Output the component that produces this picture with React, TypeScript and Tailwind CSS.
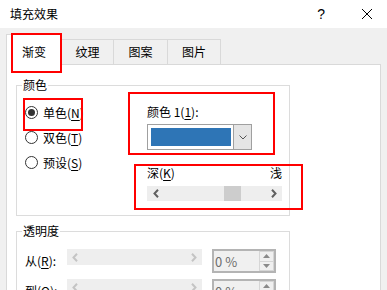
import React from "react";

const U = ({ c }: { c: string }) => <span className="underline underline-offset-[2px]">{c}</span>;

function Radio({ checked, children }: { checked?: boolean; children: React.ReactNode }) {
  return (
    <div className="h-[25px] flex items-center">
      <div className="ml-[8px] w-[13px] h-[13px] rounded-full border border-[#333333] bg-white flex items-center justify-center">
        {checked && <div className="w-[7px] h-[7px] rounded-full bg-[#333333]" />}
      </div>
      <span className="ml-[5px] leading-none">{children}</span>
    </div>
  );
}

function Chev({ dir, color }: { dir: "l" | "r"; color: string }) {
  return (
    <svg width="6" height="9" viewBox="0 0 6 9">
      <path
        d={dir === "l" ? "M5 0.8L1.5 4.5L5 8.2" : "M1 0.8L4.5 4.5L1 8.2"}
        fill="none"
        stroke={color}
        strokeWidth="2"
      />
    </svg>
  );
}

function Spinner() {
  return (
    <div className="ml-[10px] w-[64px] h-[24px] border-2 border-[#b4b4b4] bg-[#f0f0f0] flex">
      <div className="flex-1 flex items-center pl-[1px] text-[13px] text-[#6d6d6d] leading-none">0 %</div>
      <div className="w-[15px] flex flex-col">
        <div className="flex-1 border border-[#d6d6d6] flex items-center justify-center">
          <svg width="7" height="4" viewBox="0 0 7 4"><path d="M0 4L3.5 0L7 4Z" fill="#8a8a8a" /></svg>
        </div>
        <div className="flex-1 border border-t-0 border-[#d6d6d6] flex items-center justify-center">
          <svg width="7" height="4" viewBox="0 0 7 4"><path d="M0 0L3.5 4L7 0Z" fill="#8a8a8a" /></svg>
        </div>
      </div>
    </div>
  );
}

function TRow({ label }: { label: React.ReactNode }) {
  return (
    <div className="h-[24px] flex items-start mb-[6px]">
      <div className="pl-[8px] w-[50px] h-[24px] flex items-center leading-none">{label}</div>
      <div className="w-[135px] h-[16px] bg-[#eeeeee] flex items-center justify-between px-[5px]">
        <Chev dir="l" color="#c4c4c4" />
        <Chev dir="r" color="#c4c4c4" />
      </div>
      <Spinner />
    </div>
  );
}

export default function App() {
  return (
    <div className="relative w-[387px] h-[290px] overflow-hidden bg-[#f0f0f0] flex flex-col font-['Noto_Sans_CJK_SC',sans-serif] text-[12px] text-black">
      {/* title bar */}
      <div className="h-[28px] bg-white flex items-center shrink-0">
        <span className="ml-[10px] leading-none">填充效果</span>
        <span className="ml-auto mr-[37px] text-[14px] leading-none font-['Liberation_Sans',sans-serif]">?</span>
        <svg className="mr-[15px]" width="10" height="10" viewBox="0 0 10 10">
          <path d="M0 0L10 10M10 0L0 10" stroke="#000" strokeWidth="1" />
        </svg>
      </div>

      {/* tabs */}
      <div className="h-[36px] flex items-end pl-[6px] shrink-0 relative z-10">
        <div className="w-[56px] h-[31px] mb-[-1px] bg-white border border-b-0 border-[#d9d9d9] flex items-center justify-center pt-[4px] leading-none">
          渐变
        </div>
        <div className="w-[52px] h-[25px] border-t border-r border-[#d9d9d9] flex items-center justify-center leading-none">纹理</div>
        <div className="w-[54px] h-[25px] border-t border-r border-[#d9d9d9] flex items-center justify-center leading-none">图案</div>
        <div className="w-[53px] h-[25px] border-t border-r border-[#d9d9d9] flex items-center justify-center leading-none">图片</div>
      </div>

      {/* panel */}
      <div className="flex-1 mx-[6px] border border-[#d9d9d9] bg-white pl-[9px] pt-[20px] flex flex-col">
        {/* 颜色 group */}
        <div className="relative w-[274px] h-[131px] shrink-0 border border-[#dcdcdc] flex">
          <span className="absolute left-[5px] top-[-7px] bg-white px-[1px] leading-none">颜色</span>
          <div className="w-[130px] pt-[14px] flex flex-col">
            <Radio checked>单色(<U c="N" />)</Radio>
            <Radio>双色(<U c="T" />)</Radio>
            <Radio>预设(<U c="S" />)</Radio>
          </div>
          <div className="flex flex-col pt-[20px]">
            <span className="leading-none">颜色 1(<U c="1" />):</span>
            <div className="mt-[6px] w-[105px] h-[26px] border border-[#a0a0a0] bg-white flex">
              <div className="pl-[3px] pt-[3px]">
                <div className="w-[80px] h-[18px] bg-[#2e75b6]" />
              </div>
              <div className="ml-auto w-[18px] border-l border-[#a0a0a0] bg-[#e5e5e5] flex items-center justify-center">
                <svg width="8" height="5" viewBox="0 0 8 5"><path d="M0.5 0.5L4 4L7.5 0.5" fill="none" stroke="#555" strokeWidth="1" /></svg>
              </div>
            </div>
            <div className="mt-[17px] w-[135px] flex justify-between leading-none">
              <span>深(<U c="K" />)</span>
              <span>浅</span>
            </div>
            <div className="mt-[7px] w-[135px] h-[15px] bg-[#eeeeee] flex items-center">
              <div className="w-[17px] flex justify-center"><Chev dir="l" color="#606060" /></div>
              <div className="w-[60px]" />
              <div className="w-[17px] h-[15px] bg-[#cdcdcd]" />
              <div className="flex-1" />
              <div className="w-[17px] flex justify-center"><Chev dir="r" color="#606060" /></div>
            </div>
          </div>
        </div>

        {/* 透明度 group */}
        <div className="relative mt-[15px] w-[274px] flex-1 border border-[#dcdcdc] pt-[17px] flex flex-col">
          <span className="absolute left-[5px] top-[-7px] bg-white px-[1px] leading-none">透明度</span>
          <TRow label={<span>从(<U c="R" />):</span>} />
          <TRow label={<span>到(<U c="O" />):</span>} />
        </div>
      </div>

      {/* red annotation boxes */}
      <div className="absolute left-[11px] top-[33px] w-[51px] h-[40px] border-2 border-[#ff0000] z-20" />
      <div className="absolute left-[23px] top-[98px] w-[60px] h-[33px] border-2 border-[#ff0000] z-20" />
      <div className="absolute left-[128px] top-[92px] w-[147px] h-[63px] border-2 border-[#ff0000] z-20" />
      <div className="absolute left-[134px] top-[164px] w-[169px] h-[46px] border-2 border-[#ff0000] z-20" />
    </div>
  );
}
